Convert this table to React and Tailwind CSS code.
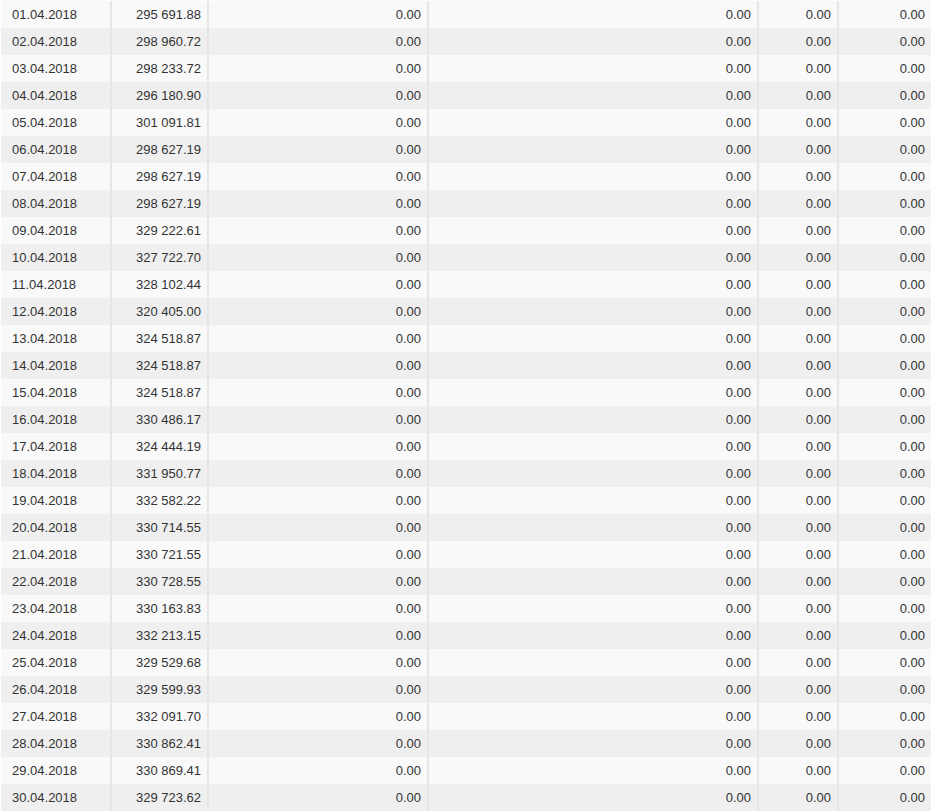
import React from 'react';

// --- DONNÉES ---
const balances = [
    '295 691.88', '298 960.72', '298 233.72', '296 180.90', '301 091.81',
    '298 627.19', '298 627.19', '298 627.19', '329 222.61', '327 722.70',
    '328 102.44', '320 405.00', '324 518.87', '324 518.87', '324 518.87',
    '330 486.17', '324 444.19', '331 950.77', '332 582.22', '330 714.55',
    '330 721.55', '330 728.55', '330 163.83', '332 213.15', '329 529.68',
    '329 599.93', '332 091.70', '330 862.41', '330 869.41', '329 723.62',
];

const rows = balances.map((balance, i) => ({
    date: `${String(i + 1).padStart(2, '0')}.04.2018`,
    balance,
}));

const cell = 'flex items-center h-full pt-px border-r-2 border-[#e6e6e6]';

// --- TABLEAU ---
const App = () => {
    return (
        <div
            className="w-[942px] h-[811px] bg-white overflow-hidden text-[13px] text-[#333333]"
            style={{ fontFamily: '"Liberation Sans", Arial, sans-serif' }}
        >
            <div className="h-px w-[931px] bg-[#fcfcfc]" />
            <div className="flex flex-col pl-px w-[931px]">
                {rows.map((row, i) => (
                    <div
                        key={row.date}
                        className={`flex h-[27px] ${i % 2 === 0 ? 'bg-[#f9f9f9]' : 'bg-[#efefef]'}`}
                    >
                        <div className={`${cell} w-[111px] pl-[11px]`}>{row.date}</div>
                        <div className={`${cell} w-[97px] justify-end pr-[6px]`}>{row.balance}</div>
                        <div className={`${cell} w-[220px] justify-end pr-[6px]`}>0.00</div>
                        <div className={`${cell} w-[330px] justify-end pr-[6px]`}>0.00</div>
                        <div className={`${cell} w-[80px] justify-end pr-[6px]`}>0.00</div>
                        <div className="flex items-center h-full pt-px w-[92px] justify-end pr-[6px]">0.00</div>
                    </div>
                ))}
            </div>
        </div>
    );
};

export default App;
